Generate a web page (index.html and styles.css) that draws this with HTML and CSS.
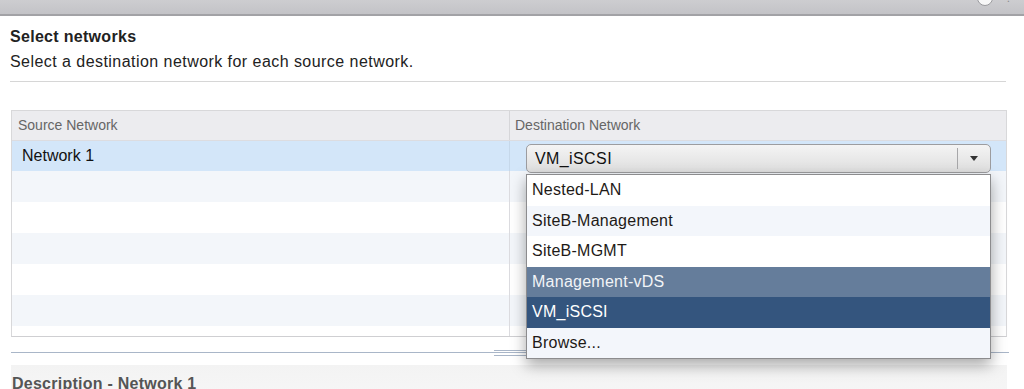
FILE: index.html
```html
<!DOCTYPE html>
<html>
<head>
<meta charset="utf-8">
<link rel="stylesheet" href="styles.css">
</head>
<body>
<div class="titlebar">
  <span class="tb-circle"></span>
  <span class="tb-help">?</span>
</div>
<div class="page">
  <h1 class="title">Select networks</h1>
  <p class="subtitle">Select a destination network for each source network.</p>
  <div class="rule"></div>

  <div class="table">
    <div class="thead">
      <div class="th th-src">Source Network</div>
      <div class="th th-dst">Destination Network</div>
    </div>
    <div class="tbody">
      <div class="row selected">
        <div class="td td-src">Network 1</div>
        <div class="td td-dst">
          <div class="combo">
            <span class="combo-text">VM_iSCSI</span>
            <span class="combo-btn"><span class="arrow"></span></span>
          </div>
        </div>
      </div>
      <div class="row alt"><div class="td td-src"></div><div class="td td-dst"></div></div>
      <div class="row"><div class="td td-src"></div><div class="td td-dst"></div></div>
      <div class="row alt"><div class="td td-src"></div><div class="td td-dst"></div></div>
      <div class="row"><div class="td td-src"></div><div class="td td-dst"></div></div>
      <div class="row alt"><div class="td td-src"></div><div class="td td-dst"></div></div>
      <div class="row"><div class="td td-src"></div><div class="td td-dst"></div></div>
    </div>
    <ul class="menu">
      <li class="item">Nested-LAN</li>
      <li class="item alt">SiteB-Management</li>
      <li class="item">SiteB-MGMT</li>
      <li class="item hover">Management-vDS</li>
      <li class="item current">VM_iSCSI</li>
      <li class="item alt">Browse...</li>
    </ul>
  </div>

  <div class="splitter"><span class="grip"></span></div>

  <div class="desc">
    <h2 class="desc-title">Description - Network 1</h2>
  </div>
</div>
</body>
</html>
```

FILE: styles.css
```css
* { box-sizing: border-box; }
html, body { margin: 0; padding: 0; background: #fff; }
body {
  font-family: "Liberation Sans", Arial, Helvetica, sans-serif;
  color: #222;
  width: 1024px;
  height: 389px;
  overflow: hidden;
}

.titlebar {
  height: 16px;
  background: linear-gradient(#cdcdd0, #c3c3c7);
  border-bottom: 2px solid #a2a2a6;
  display: flex;
  justify-content: flex-end;
  align-items: flex-start;
  padding-right: 12px;
  overflow: hidden;
}
.tb-circle {
  width: 16px;
  height: 16px;
  margin-top: -10px;
  border-radius: 50%;
  background: #f7f7f7;
  border: 1px solid #9a9a9e;
}
.tb-help {
  margin-left: 12px;
  margin-top: -9px;
  font-size: 12px;
  color: #8e8e92;
}

.page { padding: 0 10px; }

.title {
  margin: 12px 0 0 0;
  font-size: 16px;
  line-height: 18px;
  font-weight: bold;
  letter-spacing: 0.3px;
  color: #222;
}
.subtitle {
  margin: 7px 0 0 0;
  font-size: 16px;
  line-height: 18px;
  letter-spacing: 0.45px;
  color: #222;
}
.rule {
  margin-top: 10px;
  height: 1px;
  width: 996px;
  background: #d6d6d6;
}

.table {
  position: relative;
  margin-top: 28px;
  margin-left: 1px;
  width: 996px;
  border: 1px solid #d8d8da;
  border-bottom-color: #cfcfd2;
}
.thead {
  display: grid;
  grid-template-columns: 497px 1fr;
  height: 30px;
  background: #ececef;
  border-bottom: 1px solid #dcdce0;
}
.th {
  font-size: 14px;
  line-height: 29px;
  color: #666;
  padding-left: 6px;
}
.th-dst { border-left: 1px solid #d6d6d9; padding-left: 5px; }

.tbody {
  height: 195px;
  overflow: hidden;
}
.row {
  display: grid;
  grid-template-columns: 497px 1fr;
  height: 31px;
  background: #fff;
}
.row.alt { background: #f3f6fa; }
.row.selected { background: #d3e6f9; height: 30px; }
.td { height: 100%; }
.td-dst { border-left: 1px solid #dcdce0; }
.td-src {
  font-size: 16px;
  line-height: 30px;
  color: #111;
  padding-left: 10px;
}
.row.selected .td-dst { border-left-color: #c6d8ea; }

.combo {
  margin: 3px 0 0 16px;
  width: 465px;
  height: 29px;
  border: 1px solid #9c9c9f;
  border-radius: 5px;
  background: linear-gradient(#f4f4f4, #dedede);
  display: flex;
  align-items: center;
}
.combo-text {
  flex: 1;
  font-size: 16px;
  letter-spacing: 0.4px;
  color: #111;
  padding-left: 8px;
}
.combo-btn {
  width: 33px;
  height: 21px;
  border-left: 1px solid #a7a7a9;
  display: flex;
  align-items: center;
  justify-content: center;
}
.arrow {
  width: 0;
  height: 0;
  border-left: 4px solid transparent;
  border-right: 4px solid transparent;
  border-top: 5px solid #333;
}

.menu {
  position: absolute;
  left: 514px;
  top: 63px;
  width: 465px;
  margin: 0;
  padding: 0;
  list-style: none;
  background: #fff;
  border: 1px solid #8c8c8e;
  box-shadow: 0 6px 14px rgba(0, 0, 0, 0.35);
  z-index: 2;
}
.item {
  height: 30.5px;
  line-height: 30px;
  font-size: 16px;
  letter-spacing: 0.25px;
  color: #1e1a17;
  padding-left: 5px;
  background: #fff;
}
.item.alt { background: #f3f6fb; }
.item.hover { background: #657d9b; color: #f2f4f7; }
.item.current { background: #34557e; color: #fff; }

.splitter {
  margin-top: 13px;
  margin-left: 1px;
  width: 998px;
  height: 6px;
  background: linear-gradient(#a9b6c8, #a9b6c8) 0 2px / 100% 1px no-repeat;
  display: flex;
}
.grip {
  margin-left: 483px;
  width: 32px;
  height: 6px;
  border-top: 1px solid #a9b6c8;
  border-bottom: 1px solid #a9b6c8;
}

.desc {
  margin-top: 9px;
  margin-left: 1px;
  width: 996px;
  height: 40px;
  background: linear-gradient(#f3f3f3, #f7f7f7);
  padding-left: 1px;
}
.desc-title {
  margin: 0;
  padding-top: 10px;
  font-size: 16px;
  line-height: 18px;
  font-weight: bold;
  letter-spacing: 0.25px;
  color: #555;
}
```
